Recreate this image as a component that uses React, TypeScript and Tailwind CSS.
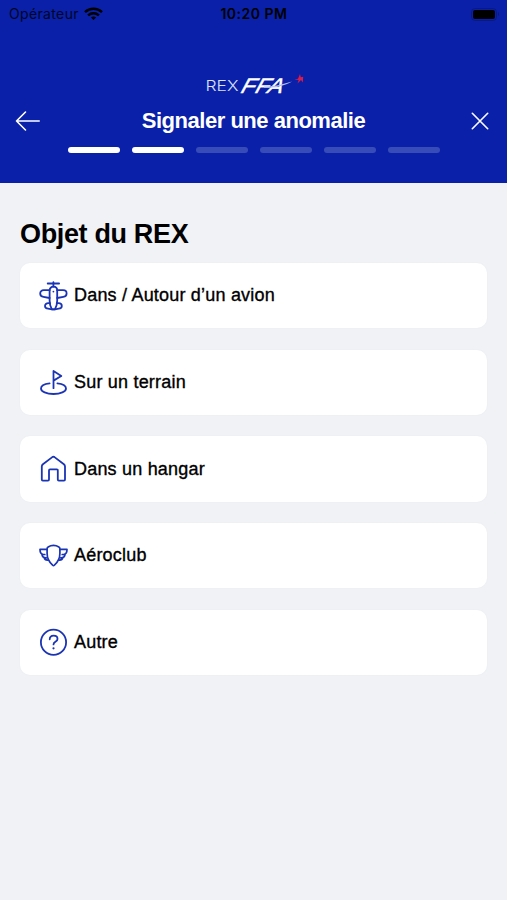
import type { ReactNode } from "react";

const PlaneIcon = () => (
  <svg className="h-[30px] w-[29px]" viewBox="0 0 29 30" fill="none" stroke="currentColor" strokeWidth={1.8} strokeLinecap="round" strokeLinejoin="round">
    <path d="M8.700 2.500h11.400M14.400 1.200v4.500" />
    <path d="M10.600 9.400c0-2.100 1.600-3.700 3.800-3.700s3.800 1.600 3.800 3.700v10c0 3.600-.9 6.500-2.200 8.900h-3.200c-1.300-2.400-2.200-5.300-2.200-8.900Z" />
    <path d="M10.600 9.200H4.700c-2.100 0-3.500 1.300-3.500 3.200 0 2 1.200 3.100 3.300 3.500l6.100 1.100" />
    <path d="M18.200 9.200h5.900c2.100 0 3.500 1.300 3.500 3.200 0 2-1.200 3.100-3.300 3.500L18.200 17" />
    <path d="M11 22.200H9.300C7.300 22.200 6 23.400 6 25c0 1.700 1.300 2.500 3.100 2.600l3.700.7H16l3.700-.7c1.800-.1 3.100-.9 3.100-2.600 0-1.600-1.300-2.800-3.300-2.800h-1.700" />
    <circle cx="14.400" cy="10.600" r="0.900" fill="currentColor" stroke="none" />
  </svg>
);

const FieldIcon = () => (
  <svg className="h-[30px] w-[29px]" viewBox="0 0 29 30" fill="none" stroke="currentColor" strokeWidth={1.8} strokeLinecap="round" strokeLinejoin="round">
    <path d="M14.500 21.200V4l7.800 5-7.800 4.600" />
    <path d="M10.600 16.400C5.500 16.900 2 19 2 21.500c0 3.100 5.500 5.500 12.500 5.500S27 24.600 27 21.500c0-2.500-3.500-4.600-8.600-5.100" />
  </svg>
);

const HangarIcon = () => (
  <svg className="h-[30px] w-[29px]" viewBox="0 0 29 30" fill="none" stroke="currentColor" strokeWidth={1.8} strokeLinecap="round" strokeLinejoin="round">
    <path d="M2.800 12.500c0-1 .4-1.600 1.100-2.200l9.400-7.200c.7-.5 1.500-.5 2.200 0l9.400 7.200c.7.600 1.100 1.200 1.100 2.200v13.100c0 .7-.3 1-1 1h-5.200c-.7 0-1-.3-1-1v-9.200c0-.7-.3-1-1-1H11c-.7 0-1 .3-1 1v9.200c0 .7-.3 1-1 1H3.800c-.7 0-1-.3-1-1Z" />
  </svg>
);

const ClubIcon = () => (
  <svg className="h-[30px] w-[29px]" viewBox="0 0 29 30" fill="none" stroke="currentColor" strokeWidth={1.7} strokeLinecap="round" strokeLinejoin="round">
    <path d="M14.500 4.400c1.900 0 3.800.6 5.400 1.600.7.400 1 1 1 1.900v4.600c0 5-2.400 8.900-5.500 11.700-.6.500-1.200.5-1.800 0-3.100-2.800-5.500-6.700-5.500-11.700V7.900c0-.9.300-1.500 1-1.900 1.600-1 3.500-1.600 5.400-1.600Z" />
    <path d="M8 8.400H1c0 3 1.200 4.700 3.200 5.100h1.600M3 13.500c.2 2 1.400 3.200 3.400 3.300h.9M5.200 16.800c.4 1.700 1.600 2.500 3.600 2.400" />
    <path d="M21 8.400h7c0 3-1.200 4.700-3.200 5.100h-1.600M26 13.500c-.2 2-1.400 3.200-3.400 3.300h-.9M23.800 16.800c-.4 1.700-1.600 2.500-3.600 2.400" />
  </svg>
);

const OtherIcon = () => (
  <svg className="h-[30px] w-[29px]" viewBox="0 0 29 30" fill="none" stroke="currentColor" strokeWidth={1.8} strokeLinecap="round" strokeLinejoin="round">
    <circle cx="14.500" cy="15.300" r="12.600" />
    <path d="M10.700 12.300c.1-2.300 1.500-3.700 3.900-3.700s3.900 1.300 3.900 3.300c0 3.100-4 2.700-4 5.500" />
    <circle cx="14.500" cy="21.300" r="1.100" fill="currentColor" stroke="none" />
  </svg>
);

const items: { label: string; icon: ReactNode }[] = [
  { label: "Dans / Autour d’un avion", icon: <PlaneIcon /> },
  { label: "Sur un terrain", icon: <FieldIcon /> },
  { label: "Dans un hangar", icon: <HangarIcon /> },
  { label: "Aéroclub", icon: <ClubIcon /> },
  { label: "Autre", icon: <OtherIcon /> },
];

const steps = [true, true, false, false, false, false];

function StatusBar() {
  return (
    <div className="grid h-[28px] grid-cols-3 items-center pr-2 pl-[9px] text-black">
      <div className="flex items-center gap-[5px]">
        <span className="font-['Inter',sans-serif] text-[14px] leading-none tracking-[0.35px] opacity-80">
          Opérateur
        </span>
        <svg className="h-[14px] w-[19px]" viewBox="0 0 19 14" fill="none" stroke="currentColor" strokeWidth={2.500}>
          <path d="M1 5.100c4.900-4.500 12.100-4.500 17 0" />
          <path d="M4.100 8.400c3.100-2.800 7.700-2.800 10.800 0" />
          <path d="m9.500 13-2.600-2.500c1.500-1.300 3.700-1.300 5.200 0Z" fill="currentColor" stroke="none" />
        </svg>
      </div>
      <span className="text-center font-['Inter',sans-serif] text-[14px] leading-none font-semibold tracking-[0.5px]">
        10:20 PM
      </span>
      <div className="flex items-center justify-end gap-px">
        <div className="rounded-[4px] border border-black/20 p-px">
          <div className="h-[9px] w-[22px] rounded-[2px] bg-black" />
        </div>
        <div className="h-1 w-px rounded-r bg-black/20" />
      </div>
    </div>
  );
}

function Logo() {
  return (
    <svg className="h-[26px] w-[100px]" viewBox="0 0 100 26" role="img" aria-label="REX FFA">
      <text x="1.500" y="20" textLength="33" lengthAdjust="spacingAndGlyphs" className="font-['Inter',sans-serif] text-[14px] font-light" fill="#dce2fa">
        REX
      </text>
      <g transform="translate(36 21.500) skewX(-18)">
        <text x="0" y="0" textLength="42" lengthAdjust="spacingAndGlyphs" className="font-['Liberation_Sans',sans-serif] text-[21px] italic" fill="#fff" stroke="#fff" strokeWidth={0.400}>
          FFA
        </text>
      </g>
      <path d="M60 15.500c9 .1 18-1.800 28-5-8 4.600-18 6.700-28 6.200Z" fill="#b5c1f1" />
      <path d="m90.500 8.500 3.500-.8 2-4.700.8 3.300 2.400-.6-.4 5.800-1.800-2.500-3.500 3.500 1.200-3.500Z" fill="#d51d4e" />
    </svg>
  );
}

export default function App() {
  return (
    <div className="min-h-[900px] bg-[#f0f2f6] font-['Liberation_Sans',Arial,sans-serif] text-black">
      <header className="h-[183px] bg-[#0a20a8]">
        <StatusBar />
        <div className="flex h-[78px] items-end justify-center pb-[9px]">
          <Logo />
        </div>
        <div className="flex h-[29px] items-center justify-between pr-[18px] pl-[15px] text-white">
          <button type="button" aria-label="Retour">
            <svg className="h-[22px] w-[26px]" viewBox="0 0 26 22" fill="none" stroke="currentColor" strokeWidth={1.600} strokeLinecap="round" strokeLinejoin="round">
              <path d="M24.200 11H1.500M10.500 2l-9 9 9 9" />
            </svg>
          </button>
          <h1 className="-ml-[5px] text-[22px] leading-none font-bold tracking-[-0.48px] whitespace-nowrap">
            Signaler une anomalie
          </h1>
          <button type="button" aria-label="Fermer">
            <svg className="h-[18px] w-[18px]" viewBox="0 0 18 18" fill="none" stroke="currentColor" strokeWidth={1.600} strokeLinecap="round">
              <path d="m1.300 1.300 15.400 15.400M16.700 1.300 1.300 16.700" />
            </svg>
          </button>
        </div>
        <div className="mt-3 flex justify-center gap-3">
          {steps.map((done, i) => (
            <div
              key={i}
              className={done ? "h-[6px] w-[52px] rounded-full bg-white" : "h-[6px] w-[52px] rounded-full bg-[#384cb9]"}
            />
          ))}
        </div>
      </header>

      <main className="px-5 pt-[34px]">
        <h2 className="text-[27px] leading-[34px] font-bold tracking-[-0.35px]">
          Objet du REX
        </h2>
        <div className="mt-3 flex flex-col gap-[21.400px]">
          {items.map((item) => (
            <button
              key={item.label}
              type="button"
              className="flex h-[65.300px] w-full items-center gap-[6px] rounded-[10px] bg-white pl-[19px] text-left text-[18px] tracking-[0.2px] shadow-[0_0_2px_rgba(0,0,0,0.04)]"
            >
              <span className="text-[#1b34b4]">{item.icon}</span>
              <span className="[-webkit-text-stroke:0.35px_black]">{item.label}</span>
            </button>
          ))}
        </div>
      </main>
    </div>
  );
}
